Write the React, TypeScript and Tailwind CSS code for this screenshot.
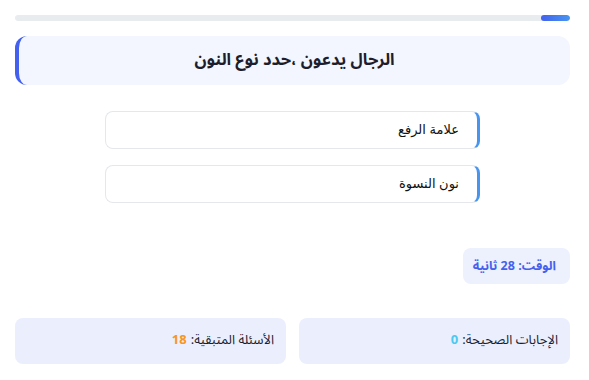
const options = ['علامة الرفع', 'نون النسوة'];

export default function App() {
  return (
    <div
      dir="rtl"
      className="min-h-screen bg-white pt-[15px] pr-[19px] pl-[15px] font-['Noto_Sans_Arabic','Noto_Sans','DejaVu_Sans',sans-serif]"
    >
      <div className="h-1.5 w-full overflow-hidden rounded-full bg-[#e9ecef]">
        <div className="h-full w-[5.2%] rounded-full bg-gradient-to-l from-[#4895ef] to-[#4361ee]" />
      </div>

      <div className="mt-[15px] flex h-[49px] items-center justify-center rounded-xl border-l-4 border-[#4361ee] bg-[#f3f6fe]">
        <h2 className="text-[16.5px] font-bold text-[#1d1d2c]">الرجال يدعون ،حدد نوع النون</h2>
      </div>

      <div className="mx-auto mt-[26px] flex w-[375px] flex-col gap-4">
        {options.map((o) => (
          <div
            key={o}
            className="flex h-[38px] cursor-pointer items-center rounded-lg border border-r-[3px] border-[#e5e7eb] border-r-[#4895ef] bg-white pr-[18px] font-['Liberation_Sans','DejaVu_Sans',sans-serif] text-[13px] text-[#111]"
          >
            {o}
          </div>
        ))}
      </div>

      <div className="mt-[45px] flex">
        <div className="flex h-9 items-center rounded-lg bg-[#edf0fd] pr-[14px] pl-[10px] text-[12.5px] font-bold text-[#4361ee]">
          الوقت: 28 ثانية
        </div>
      </div>

      <div className="mt-[34px] grid grid-cols-2 gap-[13px]">
        <div className="flex h-[46px] items-center rounded-lg bg-[#ebeffd] px-3 text-[13px] text-[#1d1d2c]">
          الإجابات الصحيحة: <span className="mr-1 font-bold text-[#4cc9f0]">0</span>
        </div>
        <div className="flex h-[46px] items-center rounded-lg bg-[#ebeffd] px-3 text-[13px] text-[#1d1d2c]">
          الأسئلة المتبقية: <span className="mr-1 font-bold text-[#f8961e]">18</span>
        </div>
      </div>
    </div>
  );
}
